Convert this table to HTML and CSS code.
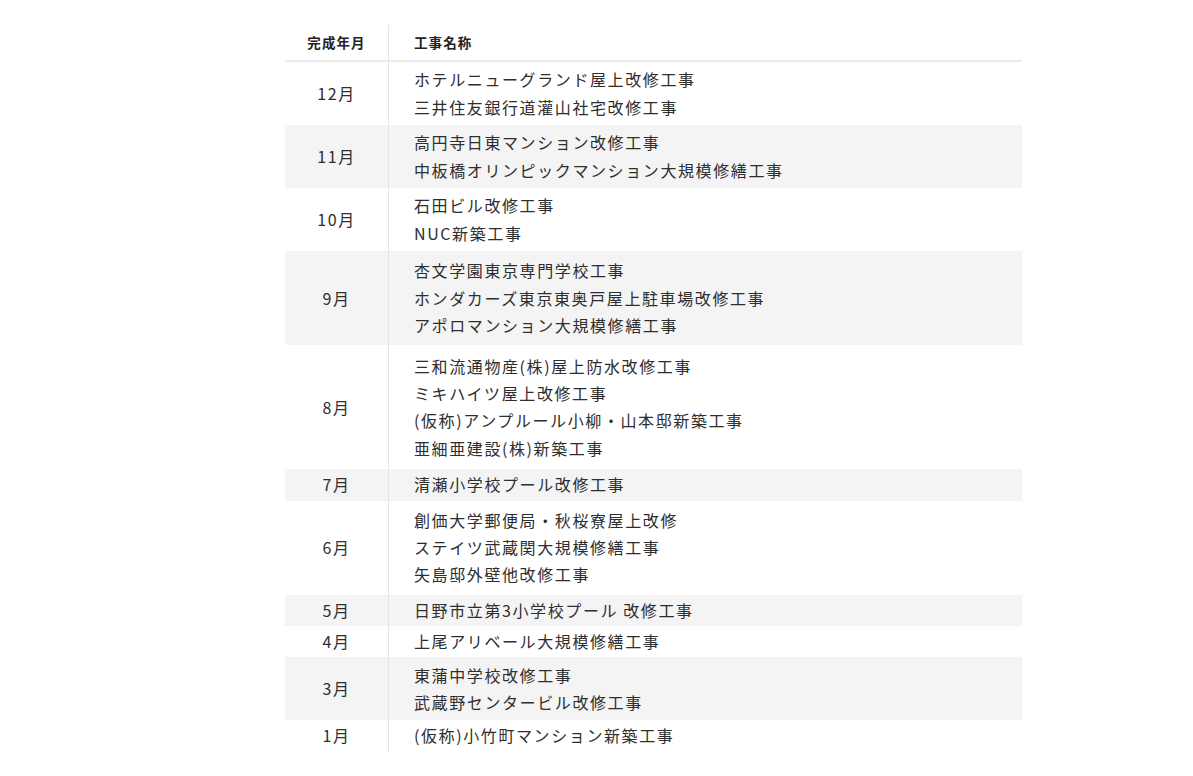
FILE: index.html
```html
<!DOCTYPE html>
<html lang="ja">
<head>
<meta charset="utf-8">
<title>施工実績</title>
<link rel="stylesheet" href="styles.css">
</head>
<body>
<div class="page">
  <table class="works">
    <thead>
      <tr>
        <th class="col-month">完成年月</th>
        <th class="col-name">工事名称</th>
      </tr>
    </thead>
    <tbody>
      <tr class="l2">
        <td class="month">12月</td>
        <td class="name">ホテルニューグランド屋上改修工事<br>三井住友銀行道灌山社宅改修工事</td>
      </tr>
      <tr class="l2 alt">
        <td class="month">11月</td>
        <td class="name">高円寺日東マンション改修工事<br>中板橋オリンピックマンション大規模修繕工事</td>
      </tr>
      <tr class="l2">
        <td class="month">10月</td>
        <td class="name">石田ビル改修工事<br>NUC新築工事</td>
      </tr>
      <tr class="l3 alt">
        <td class="month">9月</td>
        <td class="name">杏文学園東京専門学校工事<br>ホンダカーズ東京東奥戸屋上駐車場改修工事<br>アポロマンション大規模修繕工事</td>
      </tr>
      <tr class="l4">
        <td class="month">8月</td>
        <td class="name">三和流通物産(株)屋上防水改修工事<br>ミキハイツ屋上改修工事<br>(仮称)アンプルール小柳・山本邸新築工事<br>亜細亜建設(株)新築工事</td>
      </tr>
      <tr class="l1 alt">
        <td class="month">7月</td>
        <td class="name">清瀬小学校プール改修工事</td>
      </tr>
      <tr class="l3">
        <td class="month">6月</td>
        <td class="name">創価大学郵便局・秋桜寮屋上改修<br>ステイツ武蔵関大規模修繕工事<br>矢島邸外壁他改修工事</td>
      </tr>
      <tr class="l1 alt">
        <td class="month">5月</td>
        <td class="name">日野市立第3小学校プール 改修工事</td>
      </tr>
      <tr class="l1">
        <td class="month">4月</td>
        <td class="name">上尾アリベール大規模修繕工事</td>
      </tr>
      <tr class="l2 alt">
        <td class="month">3月</td>
        <td class="name">東蒲中学校改修工事<br>武蔵野センタービル改修工事</td>
      </tr>
      <tr class="l1">
        <td class="month">1月</td>
        <td class="name">(仮称)小竹町マンション新築工事</td>
      </tr>
    </tbody>
  </table>
</div>
</body>
</html>
```

FILE: styles.css
```css
html, body {
  margin: 0;
  padding: 0;
  background: #ffffff;
}

body {
  font-family: "Noto Sans CJK JP", "Noto Sans", sans-serif;
  color: #333333;
}

.page {
  padding: 25px 0 0 285px;
}

.works {
  width: 737px;
  border-collapse: collapse;
  border-spacing: 0;
}

.works th {
  font-size: 13.5px;
  font-weight: 700;
  letter-spacing: 0.08em;
  line-height: 19px;
  padding: 8px 0;
  border-bottom: 2px solid #ebebeb;
  color: #222222;
}

.works .col-month {
  width: 103px;
  text-align: center;
  border-right: 1px solid #e6e6e6;
}

.works .col-name {
  text-align: left;
  padding-left: 25px;
}

.works td {
  font-size: 16px;
  line-height: 27.2px;
  letter-spacing: 0.1em;
  vertical-align: middle;
  color: #2e2e2e;
}

.works .month {
  text-align: center;
  border-right: 1px solid #e6e6e6;
}

.works .name {
  text-align: left;
  padding-left: 25px;
}

.works tr.alt td {
  background: #f4f4f4;
}

.works tr.l1 td { padding-top: 2px; padding-bottom: 2px; }
.works tr.l2 td { padding-top: 4.3px; padding-bottom: 4.3px; }
.works tr.l3 td { padding-top: 6.4px; padding-bottom: 6.4px; }
.works tr.l4 td { padding-top: 7.6px; padding-bottom: 7.6px; }
```
